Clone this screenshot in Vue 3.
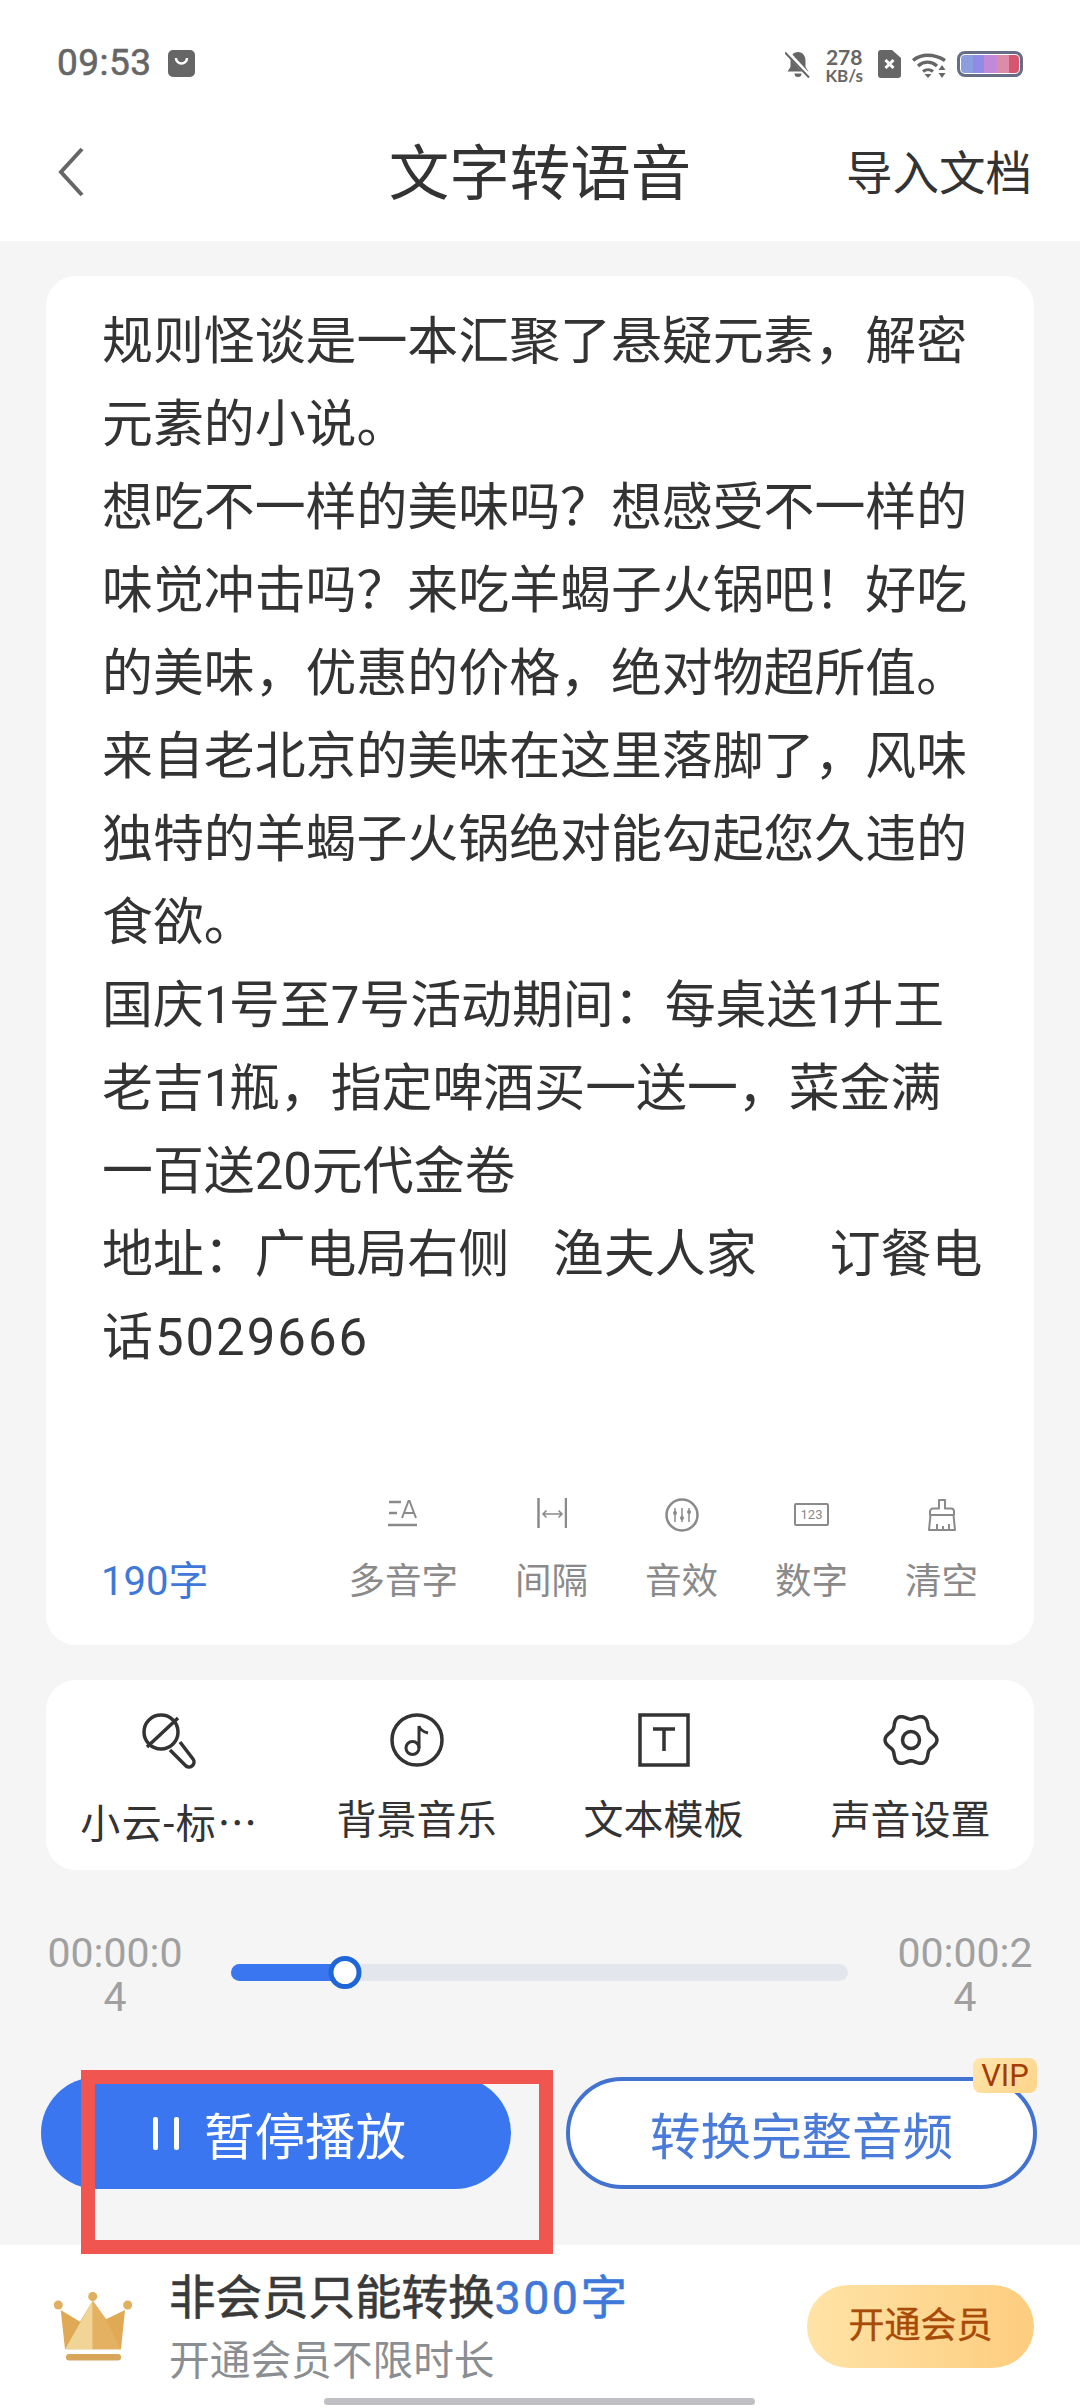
<template>
  <div class="page">
    <header class="top">
      <div class="status">
        <span class="clock">09:53</span>
        <svg class="bag" viewBox="0 0 27 27"><path d="M5 0h17a5 5 0 0 1 5 5v17a5 5 0 0 1-5 5H5a5 5 0 0 1-5-5V5a5 5 0 0 1 5-5z" fill="#666"/><path d="M8 8a5.500 5.500 0 0 0 11 0" fill="none" stroke="#fff" stroke-width="2.500"/></svg>
        <div class="status-right">
          <svg class="bell" viewBox="0 0 26 28"><path d="M13 2c5 0 7.500 4 7.500 9v6l3 4.500H2.500l3-4.500v-6C5.500 6 8 2 13 2z" fill="#666"/><path d="M9.500 23.500h7a3.500 3.500 0 0 1-7 0z" fill="#666"/><path d="M1 1l24 26" stroke="#fff" stroke-width="4.500"/><path d="M0 2.500l24 25" stroke="#666" stroke-width="2"/></svg>
          <div class="speed"><span>278</span><span class="unit">KB/s</span></div>
          <svg class="sim" viewBox="0 0 23 28"><path d="M3 0h11l9 8v17a3 3 0 0 1-3 3H3a3 3 0 0 1-3-3V3a3 3 0 0 1 3-3z" fill="#666"/><path d="M7.500 10l8 8M15.500 10l-8 8" stroke="#fff" stroke-width="3"/></svg>
          <svg class="wifi" viewBox="0 0 34 26"><path d="M1 8.500C9 1.500 22 1.500 33 8.500" fill="none" stroke="#666" stroke-width="3.500"/><path d="M6 14c6-5 13-5 19 0" fill="none" stroke="#666" stroke-width="3.500"/><path d="M11 19.500c3-2.500 7-2.500 10 0" fill="none" stroke="#666" stroke-width="3"/><path d="M12.500 22h7l-3.500 4z" fill="#666"/><path d="M30 13l3.500 5h-7zM30 26l-3.500-5h7z" fill="#666"/></svg>
          <div class="battery"><div class="charge"></div></div>
        </div>
      </div>
      <nav class="nav">
        <svg class="back" viewBox="0 0 26 50"><path d="M24 2L3 25l21 23" fill="none" stroke="#666" stroke-width="4"/></svg>
        <h1 class="title">文字转语音</h1>
        <span class="import">导入文档</span>
      </nav>
    </header>

    <main class="main">
      <section class="card editor">
        <div class="body-text">
          <div v-for="line in lines" :key="line" class="line">
            <!-- the source font has a narrow 1, Roboto's is tabular -->
            <template v-for="(part, i) in line.split('1')" :key="i"><span v-if="i" class="one">1</span>{{ part }}</template>
          </div>
        </div>
        <div class="editor-foot">
          <span class="count">190字</span>
          <div class="tools">
            <div class="tool">
              <svg class="tool-icon" width="30" height="34" viewBox="0 0 30 34"><path d="M1 4h12M1 15h8M0 27h29" fill="none" stroke="#8a8a8a" stroke-width="2.500"/><path d="M14 20L20.500 3h1L28 20M16 15h10" fill="none" stroke="#8a8a8a" stroke-width="2"/></svg>
              <span>多音字</span>
            </div>
            <div class="tool">
              <svg class="tool-icon" width="30" height="34" viewBox="0 0 30 34"><path d="M1.500 0v30M29 0v30" stroke="#8a8a8a" stroke-width="2.500"/><path d="M6 16h19M9.500 12.500L6 16l3.500 3.500M21.500 12.500L25 16l-3.500 3.500" fill="none" stroke="#8a8a8a" stroke-width="1.600"/></svg>
              <span>间隔</span>
            </div>
            <div class="tool">
              <svg class="tool-icon" width="34" height="34" viewBox="0 0 34 34"><circle cx="17" cy="17" r="15.500" fill="none" stroke="#8a8a8a" stroke-width="2.500"/><path d="M10 10v14M17 10v14M24 10v14" stroke="#8a8a8a" stroke-width="1.500"/><circle cx="10" cy="15" r="2" fill="#8a8a8a"/><circle cx="17" cy="20" r="2" fill="#8a8a8a"/><circle cx="24" cy="14" r="2" fill="#8a8a8a"/></svg>
              <span>音效</span>
            </div>
            <div class="tool">
              <div class="num-box">123</div>
              <span>数字</span>
            </div>
            <div class="tool">
              <svg class="tool-icon" width="28" height="34" viewBox="0 0 28 34"><path d="M11 2h6v8.500h6a3 3 0 0 1 3 3V17H2v-3.500a3 3 0 0 1 3-3h6zM2.500 17L1 32h26l-1.500-15M9 32v-6M15 32v-4M21 32v-6" fill="none" stroke="#8a8a8a" stroke-width="2" stroke-linejoin="round"/></svg>
              <span>清空</span>
            </div>
          </div>
        </div>
      </section>

      <section class="card options">
        <div class="option">
          <svg class="opt-icon" viewBox="10 10 60 60"><circle cx="31" cy="32" r="17" fill="none" stroke="#333" stroke-width="3.500"/><path d="M17 47L48 18M40 50l16 16a5 5 0 0 0 7-7L50 42" fill="none" stroke="#333" stroke-width="3.500" stroke-linejoin="round"/></svg>
          <span class="voice">小云-标<i class="dots">…</i></span>
        </div>
        <div class="option">
          <svg class="opt-icon" viewBox="0 0 60 60"><circle cx="30" cy="30" r="25" fill="none" stroke="#333" stroke-width="3.500"/><circle cx="25.500" cy="38" r="6.500" fill="none" stroke="#333" stroke-width="3"/><path d="M32 38V16c1 4 5 6 9 7" fill="none" stroke="#333" stroke-width="3"/></svg>
          <span>背景音乐</span>
        </div>
        <div class="option">
          <svg class="opt-icon" viewBox="0 0 60 60"><rect x="6" y="5" width="48" height="50" fill="none" stroke="#333" stroke-width="3.500"/><path d="M19 19h22M30 19v22" fill="none" stroke="#333" stroke-width="3.500"/></svg>
          <span>文本模板</span>
        </div>
        <div class="option">
          <svg class="opt-icon" viewBox="0 0 60 60"><path :d="gearPath" fill="none" stroke="#333" stroke-width="3.500" stroke-linejoin="round"/><circle cx="30" cy="30" r="8.500" fill="none" stroke="#333" stroke-width="3.500"/></svg>
          <span>声音设置</span>
        </div>
      </section>

      <section class="progress">
        <div class="time">00:00:04</div>
        <div class="track">
          <div class="fill" :style="{ width: fillWidth }"></div>
          <div class="thumb" :style="{ left: fillWidth }"></div>
        </div>
        <div class="time">00:00:24</div>
      </section>

      <section class="actions">
        <button class="btn play">
          <span class="pause"><i></i><i></i></span>
          暂停播放
        </button>
        <button class="btn convert">
          转换完整音频
          <span class="vip">VIP</span>
        </button>
      </section>
    </main>

    <footer class="member">
      <svg class="crown" viewBox="0 0 78 69">
        <circle cx="4.300" cy="13" r="4.500" fill="#dfb060"/>
        <circle cx="38.700" cy="4.500" r="4.500" fill="#dfb060"/>
        <circle cx="73.700" cy="13" r="4.500" fill="#dfb060"/>
        <path d="M6.700 18L26 29.700 38.700 8.700 52 27.300 71 18 67 57.300H11z" fill="#dfa955"/>
        <path d="M38.700 8.700L11 57.300h27.700z" fill="#f0d596"/>
        <path d="M38.700 8.700V57.300H67L52 27.300z" fill="#e4b062"/>
        <rect x="12" y="62" width="55" height="6.500" rx="3" fill="#d8a659"/>
      </svg>
      <div class="member-text">
        <div class="member-title">非会员只能转换<span class="blue"><span class="digits">300</span>字</span></div>
        <div class="member-sub">开通会员不限时长</div>
      </div>
      <button class="open-vip">开通会员</button>
    </footer>

    <div class="home-bar"></div>
    <div class="red-mark"></div>
  </div>
</template>

<script setup>
const lines = [
  '规则怪谈是一本汇聚了悬疑元素，解密',
  '元素的小说。',
  '想吃不一样的美味吗？想感受不一样的',
  '味觉冲击吗？来吃羊蝎子火锅吧！好吃',
  '的美味，优惠的价格，绝对物超所值。',
  '来自老北京的美味在这里落脚了，风味',
  '独特的羊蝎子火锅绝对能勾起您久违的',
  '食欲。',
  '国庆1号至7号活动期间：每桌送1升王',
  '老吉1瓶，指定啤酒买一送一，菜金满',
  '一百送20元代金卷',
  '地址：广电局右侧   渔夫人家     订餐电',
  '话5029666'
]

const fillWidth = '18.500%'

// six soft lobes round the settings gear
const gearPoints = []
for (let deg = 0; deg < 360; deg += 5) {
  const a = (deg * Math.PI) / 180
  const r = 23.4 + 2.6 * Math.cos(6 * a)
  gearPoints.push(`${(30 + r * Math.cos(a)).toFixed(2)} ${(30 + r * Math.sin(a)).toFixed(2)}`)
}
const gearPath = `M${gearPoints.join('L')}Z`
</script>

<style>
html, body {
  margin: 0;
  background: #f5f5f5;
}
</style>

<style scoped>
.page {
  position: relative;
  width: 1080px;
  height: 2408px;
  display: flex;
  flex-direction: column;
  overflow: hidden;
  background: #f5f5f5;
  font-family: Roboto, "Noto Sans CJK SC", sans-serif;
  color: #333;
}

.top {
  height: 241px;
  background: #fff;
  flex-shrink: 0;
}

.status {
  height: 112px;
  box-sizing: border-box;
  padding: 46px 57px 0 57px;
  display: flex;
  align-items: flex-start;
}

.clock {
  font-size: 37px;
  line-height: 34px;
  color: #666;
  letter-spacing: 0.5px;
  -webkit-text-stroke: 0.6px #666;
}

.bag {
  width: 27px;
  height: 27px;
  margin: 4px 0 0 16px;
}

.status-right {
  margin-left: auto;
  display: flex;
  align-items: flex-start;
}

.bell {
  width: 26px;
  height: 28px;
  margin-top: 4px;
}

.speed {
  display: flex;
  flex-direction: column;
  align-items: center;
  margin: 0 15px 0 14px;
  font-family: Lato, sans-serif;
  font-size: 21px;
  line-height: 21px;
  font-weight: 700;
  color: #666;
}

.unit {
  font-size: 17px;
  line-height: 18px;
}

.sim {
  width: 23px;
  height: 28px;
  margin: 4px 11px 0 0;
}

.wifi {
  width: 34px;
  height: 26px;
  margin: 6px 11px 0 0;
}

.battery {
  width: 66px;
  height: 26px;
  box-sizing: border-box;
  margin-top: 5px;
  padding: 1px;
  border: 3px solid #666d85;
  border-radius: 8px;
}

.charge {
  height: 100%;
  border-radius: 4px;
  background: linear-gradient(90deg, #8c9fdc 0 20%, #8f8ce8 20% 40%, #c18ad8 40% 62%, #dc8ba8 62% 82%, #d85570 82% 100%);
}

.nav {
  height: 120px;
  padding: 0 48px 0 58px;
  display: grid;
  grid-template-columns: 1fr auto 1fr;
  align-items: center;
}

.back {
  width: 26px;
  height: 50px;
}

.title {
  margin: -8px 0 0 -10px;
  font-size: 60.500px;
  font-weight: 400;
  color: #333;
}

.import {
  justify-self: end;
  margin-top: -5px;
  font-size: 46.500px;
  color: #333;
}

.main {
  flex: 1;
  padding: 35px 46px 0;
  display: flex;
  flex-direction: column;
}

.card {
  background: #fff;
  border-radius: 30px;
}

.editor {
  height: 1369px;
  box-sizing: border-box;
  padding: 24px 56px 37px 56px;
  display: flex;
  flex-direction: column;
}

.body-text {
  font-size: 50.900px;
  line-height: 83px;
  white-space: pre;
  word-spacing: 2px;
  color: #333;
}

.one {
  letter-spacing: -3.500px;
}

.line:last-child {
  letter-spacing: 2px;
}

.editor-foot {
  margin-top: auto;
  display: flex;
  align-items: flex-end;
  justify-content: space-between;
}

.count {
  margin-left: -1px;
  font-size: 40px;
  line-height: 52px;
  color: #3f78d8;
}

.tools {
  display: flex;
  gap: 57px;
}

.tool {
  display: flex;
  flex-direction: column;
  align-items: center;
  font-size: 36.500px;
  line-height: 52px;
  color: #8a8a8a;
}

.tool-icon {
  height: 34px;
  margin-bottom: 24px;
}

.num-box {
  width: 35px;
  height: 23px;
  box-sizing: border-box;
  margin: 5px 0 30px;
  border: 2px solid #8a8a8a;
  border-radius: 2px;
  font-size: 13px;
  line-height: 19px;
  text-align: center;
}

.options {
  margin-top: 35px;
  height: 190px;
  display: grid;
  grid-template-columns: repeat(4, 1fr);
  align-items: start;
}

.option {
  padding-top: 30px;
  display: flex;
  flex-direction: column;
  align-items: center;
  font-size: 40px;
  line-height: 56px;
  color: #333;
}

.opt-icon {
  width: 60px;
  height: 60px;
  margin-bottom: 23px;
}

.voice {
  letter-spacing: 1.500px;
}

.dots {
  font-style: normal;
  font-family: "Noto Sans CJK SC", sans-serif;
}

.progress {
  margin-top: 61px;
  display: flex;
  align-items: flex-start;
}

.time {
  width: 138px;
  flex-shrink: 0;
  font-size: 41px;
  line-height: 44px;
  text-align: center;
  word-break: break-all;
  color: #a0a0a0;
}

.track {
  position: relative;
  flex: 1;
  height: 17px;
  margin: 33px 48px 0 47px;
  border-radius: 9px;
  background: #e3e7ed;
}

.fill {
  height: 100%;
  border-radius: 9px;
  background: #3a76f0;
}

.thumb {
  position: absolute;
  top: -8px;
  width: 33px;
  height: 33px;
  box-sizing: border-box;
  transform: translateX(-50%);
  border: 5px solid #1f66d6;
  border-radius: 50%;
  background: #fff;
}

.actions {
  margin: 58px -3px 0 -5px;
  display: flex;
  gap: 55px;
}

.btn {
  position: relative;
  flex: 1;
  height: 112px;
  box-sizing: border-box;
  padding: 0;
  border-radius: 56px;
  font-family: inherit;
  font-size: 50.500px;
  display: flex;
  align-items: center;
  justify-content: center;
}

.play {
  border: 0;
  background: #3a76f0;
  color: #fff;
  padding-left: 7px;
}

.pause {
  display: flex;
  gap: 16px;
  margin-right: 25px;
}

.pause i {
  width: 5px;
  height: 33px;
  border-radius: 2px;
  background: #fff;
}

.convert {
  border: 4px solid #4273d0;
  background: #fff;
  color: #4a7bd8;
}

.vip {
  position: absolute;
  top: -23px;
  right: -4px;
  width: 64px;
  height: 35px;
  border-radius: 8px;
  background: linear-gradient(135deg, #ffe6ae, #fdd489);
  color: #a33c06;
  font-size: 31px;
  line-height: 35px;
  text-align: center;
}

.member {
  height: 163px;
  flex-shrink: 0;
  box-sizing: border-box;
  padding: 0 46px 0 54px;
  display: flex;
  align-items: center;
  background: #fff;
}

.crown {
  width: 78px;
  height: 69px;
  margin-right: 37px;
}

.member-text {
  padding-top: 3px;
}

.member-title {
  font-size: 46.500px;
  line-height: 56px;
  color: #3a3a3a;
  -webkit-text-stroke: 0.6px currentColor;
}

.blue {
  color: #3f78d8;
}

.digits {
  letter-spacing: 2.500px;
}

.member-sub {
  margin-top: 10px;
  font-size: 40.700px;
  line-height: 50px;
  color: #8a8e92;
}

.open-vip {
  margin-left: auto;
  width: 227px;
  height: 83px;
  box-sizing: border-box;
  padding: 0 0 9px;
  border: 0;
  border-radius: 42px;
  background: linear-gradient(90deg, #ffe3a6, #fdcd7e);
  font-family: inherit;
  font-size: 36px;
  color: #a84a08;
  -webkit-text-stroke: 0.4px currentColor;
}

.home-bar {
  position: absolute;
  left: 324px;
  top: 2398px;
  width: 431px;
  height: 7px;
  border-radius: 4px;
  background: #c0c0c4;
}

.red-mark {
  position: absolute;
  left: 81px;
  top: 2070px;
  width: 472px;
  height: 184px;
  box-sizing: border-box;
  border: 14px solid #f0564f;
}
</style>
